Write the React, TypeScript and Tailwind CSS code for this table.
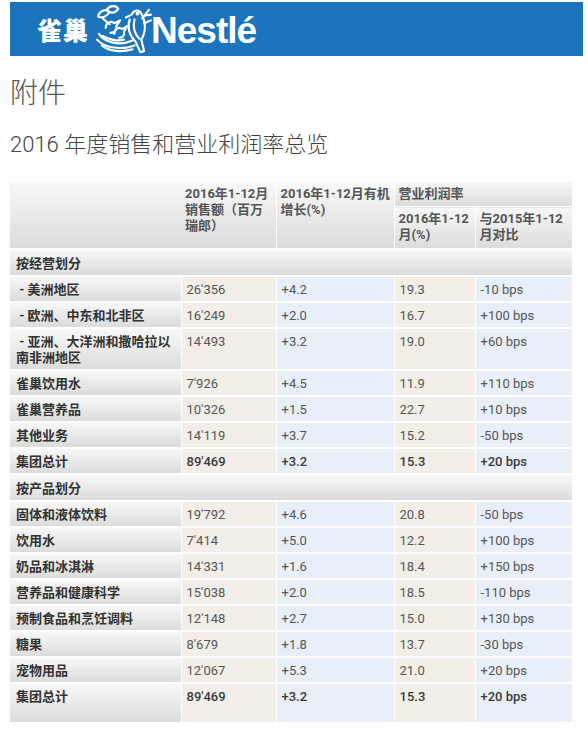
import React from "react";

type Row = {
  label: string;
  v: [string, string, string, string];
  bold?: boolean;
  last?: boolean;
};

const section1: Row[] = [
  { label: " - 美洲地区", v: ["26'356", "+4.2", "19.3", "-10 bps"] },
  { label: " - 欧洲、中东和北非区", v: ["16'249", "+2.0", "16.7", "+100 bps"] },
  { label: " - 亚洲、大洋洲和撒哈拉以南非洲地区", v: ["14'493", "+3.2", "19.0", "+60 bps"] },
  { label: "雀巢饮用水", v: ["7'926", "+4.5", "11.9", "+110 bps"] },
  { label: "雀巢营养品", v: ["10'326", "+1.5", "22.7", "+10 bps"] },
  { label: "其他业务", v: ["14'119", "+3.7", "15.2", "-50 bps"] },
  { label: "集团总计", v: ["89'469", "+3.2", "15.3", "+20 bps"], bold: true },
];

const section2: Row[] = [
  { label: "固体和液体饮料", v: ["19'792", "+4.6", "20.8", "-50 bps"] },
  { label: "饮用水", v: ["7'414", "+5.0", "12.2", "+100 bps"] },
  { label: "奶品和冰淇淋", v: ["14'331", "+1.6", "18.4", "+150 bps"] },
  { label: "营养品和健康科学", v: ["15'038", "+2.0", "18.5", "-110 bps"] },
  { label: "预制食品和烹饪调料", v: ["12'148", "+2.7", "15.0", "+130 bps"] },
  { label: "糖果", v: ["8'679", "+1.8", "13.7", "-30 bps"] },
  { label: "宠物用品", v: ["12'067", "+5.3", "21.0", "+20 bps"] },
  { label: "集团总计", v: ["89'469", "+3.2", "15.3", "+20 bps"], bold: true, last: true },
];

function NestIcon() {
  return (
    <svg width="58" height="50" viewBox="0 0 60 52" fill="none" stroke="white" strokeWidth="2.2" strokeLinecap="round" strokeLinejoin="round">
      <path d="M4 12 C6 5 13 4 16 7 C14 12 8 14 4 12 Z" />
      <path d="M13 5 C16 0 23 0 25 4 C22 9 16 9 13 5 Z" />
      <path d="M9 14 L16 20" />
      <path d="M12 24 C12 18 18 16 21 19 L27 16 L23 22 C24 26 21 29 17 29" />
      <path d="M21 30 C21 25 26 22 29 25 L34 22 L31 28 C32 31 30 34 26 34" />
      <path d="M33 13 L39 10 C41 5 47 4 49 9 C54 17 54 28 49 36 L52 48 L48 49 L43 38 C37 32 34 24 37 15" />
      <path d="M42 15 C40 23 42 30 47 35" />
      <circle cx="45" cy="9" r="0.9" fill="white" />
      <path d="M50 14 L57 5" />
      <path d="M53 11 L59 10" />
      <path d="M52 19 L59 16" />
      <path d="M5 30 C11 39 26 43 40 37" />
      <path d="M3 36 C11 45 28 47 42 42" />
      <path d="M8 42 C16 49 30 49 40 46" />
      <path d="M9 32 C15 36 24 38 31 36" />
    </svg>
  );
}

const labelBg = "bg-gradient-to-b from-[#f8f8f8] to-[#dcdcdc]";
const c1 = "bg-[#f3eee8]";
const c2 = "bg-[#e8eff8]";

function DataRow({ r }: { r: Row }) {
  const pb = r.last ? "pb-[17px]" : "pb-[3px]";
  const num = `align-top pt-[5px] ${pb} pl-[5px] pr-[4px] border-b-2 border-l border-white text-[13px] leading-[16px] ${
    r.bold ? "font-medium text-[#3a3a3a]" : "text-[#555]"
  }`;
  return (
    <tr>
      <td
        className={`${labelBg} align-top pt-[5px] ${pb} pl-[6px] pr-[4px] border-b-2 border-white text-[13px] leading-[16px] font-bold text-[#333] whitespace-pre-wrap`}
      >
        {r.label}
      </td>
      <td className={`${num} ${c1}`}>{r.v[0]}</td>
      <td className={`${num} ${c2}`}>{r.v[1]}</td>
      <td className={`${num} ${c1}`}>{r.v[2]}</td>
      <td className={`${num} ${c2}`}>{r.v[3]}</td>
    </tr>
  );
}

function SectionRow({ label }: { label: string }) {
  return (
    <tr>
      <td
        colSpan={5}
        className={`${labelBg} pt-[6px] pb-[3px] pl-[6px] border-b-2 border-white text-[13px] leading-[16px] font-bold text-[#333]`}
      >
        {label}
      </td>
    </tr>
  );
}

export default function App() {
  const head = `${labelBg} align-top pl-[4px] pr-0 text-[13px] leading-[16px] font-bold text-[#555] border-l border-white whitespace-nowrap`;
  return (
    <div
      className="bg-white min-h-[729px] pl-[10px] pr-[5px] pt-[2px]"
      style={{ fontFamily: 'Roboto, "Noto Sans CJK SC", sans-serif' }}
    >
      <div className="h-[54px] bg-[#1b74bc] flex items-center pl-[27px]">
        <span
          className="text-white text-[25px] font-black leading-none tracking-[1px]"
          style={{ fontFamily: '"Noto Sans CJK SC", sans-serif' }}
        >
          雀巢
        </span>
        <span className="ml-[5px] mt-[2px]">
          <NestIcon />
        </span>
        <span
          className="text-white text-[37px] font-bold leading-none tracking-[-1px] ml-[-1px] mt-[2px]"
          style={{ fontFamily: '"Liberation Sans", Arial, sans-serif' }}
        >
          Nestlé
        </span>
      </div>

      <h1
        className="mt-[15px] text-[28px] leading-[40px] font-light text-[#555]"
        style={{ fontFamily: '"Noto Sans CJK SC", sans-serif' }}
      >
        附件
      </h1>
      <h2 className="mt-[20px] text-[22px] leading-[28px] font-light text-[#444]">
        2016 年度销售和营业利润率总览
      </h2>

      <table className="mt-[23px] w-[562px] border-collapse table-fixed">
        <colgroup>
          <col className="w-[171px]" />
          <col className="w-[95px]" />
          <col className="w-[118px]" />
          <col className="w-[81px]" />
          <col className="w-[97px]" />
        </colgroup>
        <thead>
          <tr>
            <th rowSpan={2} className={`${labelBg} border-b-2 border-white`}></th>
            <th rowSpan={2} className={`${head} text-left pt-[4px] border-b-2 border-l-0`}>
              2016年1-12月
              <br />
              销售额（百万
              <br />
              瑞郎）
            </th>
            <th rowSpan={2} className={`${head} text-left pt-[4px] border-b-2`}>
              2016年1-12月有机
              <br />
              增长(%)
            </th>
            <th colSpan={2} className={`${head} text-left h-[24px] pt-[4px] pb-[4px] border-b border-white`}>
              营业利润率
            </th>
          </tr>
          <tr>
            <th className={`${head} text-left h-[41px] pt-[4px] pb-[5px] border-b-2`}>
              2016年1-12
              <br />
              月(%)
            </th>
            <th className={`${head} text-left h-[41px] pt-[4px] pb-[5px] border-b-2`}>
              与2015年1-12
              <br />
              月对比
            </th>
          </tr>
        </thead>
        <tbody>
          <SectionRow label="按经营划分" />
          {section1.map((r, i) => (
            <DataRow key={"a" + i} r={r} />
          ))}
          <SectionRow label="按产品划分" />
          {section2.map((r, i) => (
            <DataRow key={"b" + i} r={r} />
          ))}
        </tbody>
      </table>
    </div>
  );
}
